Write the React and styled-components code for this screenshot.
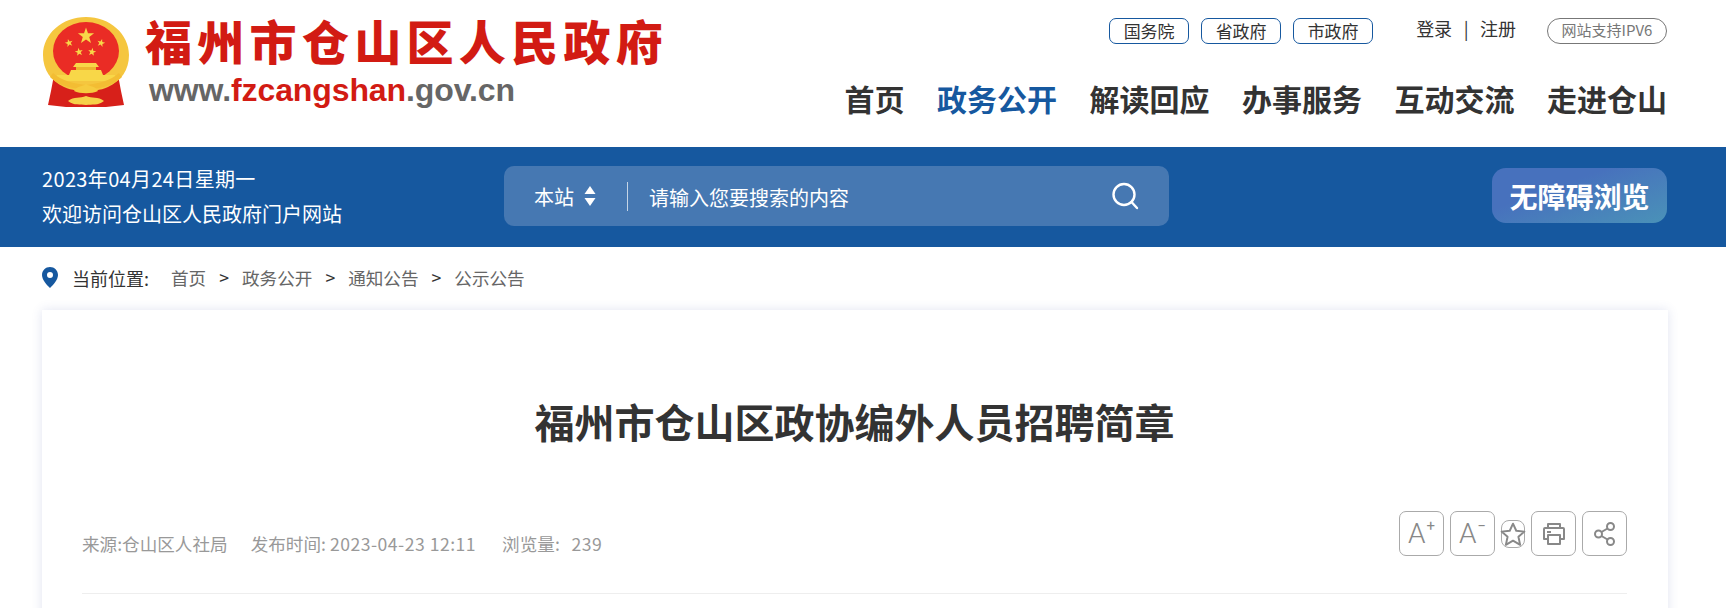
import React from "react";
import styled, { createGlobalStyle } from "styled-components";

const blue = "#16589f";
const sans = '"Noto Sans CJK SC", "Liberation Sans", sans-serif';

const GlobalStyle = createGlobalStyle`
  html, body {
    margin: 0;
    padding: 0;
    background: #fff;
    font-family: ${sans};
    overflow: hidden;
  }
  * {
    box-sizing: border-box;
  }
`;

const Page = styled.div`
  width: 1726px;
  height: 608px;
  overflow: hidden;
`;

const Header = styled.header`
  height: 147px;
  padding: 0 59px 0 42px;
  display: flex;
  justify-content: space-between;
`;

const LogoWrap = styled.div`
  display: flex;
  align-items: flex-start;
  gap: 15px;
  padding-top: 15px;
`;

const LogoText = styled.div`
  display: flex;
  flex-direction: column;
  margin-top: 1px;
`;

const LogoName = styled.div`
  font-family: "Liberation Serif", "Noto Sans CJK SC", serif;
  font-size: 47px;
  font-weight: 900;
  line-height: 56px;
  letter-spacing: 5.3px;
  color: #d21b13;
  white-space: nowrap;
`;

const LogoUrl = styled.div`
  margin: 1px 0 0 4px;
  font-family: "Liberation Sans", sans-serif;
  font-size: 32px;
  font-weight: 700;
  line-height: 34px;
  letter-spacing: -0.1px;
  color: #666;
  white-space: nowrap;

  b {
    color: #d21b13;
  }
`;

const HeaderRight = styled.div`
  display: flex;
  flex-direction: column;
  align-items: flex-end;
`;

const TopRow = styled.div`
  display: flex;
  align-items: center;
  height: 26px;
  margin-top: 18px;
`;

const TopLink = styled.a`
  width: 80px;
  height: 26px;
  margin-right: 12px;
  padding-bottom: 2px;
  display: flex;
  align-items: center;
  justify-content: center;
  border: 1px solid ${blue};
  border-radius: 7px;
  font-size: 17px;
  color: #333;
`;

const Auth = styled.div`
  margin: -6px 31px 0 31px;
  font-size: 18px;
  color: #333;
  display: flex;
  gap: 11.5px;
`;

const Ipv6 = styled.div`
  width: 120px;
  height: 26px;
  padding-bottom: 3px;
  display: flex;
  align-items: center;
  justify-content: center;
  border: 1px solid #777;
  border-radius: 13px;
  font-size: 15px;
  color: #777;
`;

const MainNav = styled.nav`
  display: flex;
  gap: 32.5px;
  margin-top: 32px;
`;

const NavItem = styled.a`
  font-size: 30px;
  line-height: 44px;
  font-weight: 700;
  color: ${(props) => (props.$active ? blue : "#333")};
`;

const Band = styled.div`
  height: 100px;
  background: ${blue};
  padding: 0 59px 0 42px;
  display: flex;
  align-items: center;
`;

const Welcome = styled.div`
  width: 462px;
  margin-top: -2px;
  color: #fff;
  font-size: 20px;
  line-height: 35px;
`;

const DateLine = styled.div`
  letter-spacing: 0.35px;
`;

const SearchBox = styled.div`
  width: 665px;
  height: 60px;
  margin-top: -2px;
  padding: 0 30px;
  border-radius: 10px;
  background: #4678b2;
  display: flex;
  align-items: center;
  color: #fff;
  font-size: 20px;
`;

const Scope = styled.div`
  width: 94px;
  height: 29px;
  display: flex;
  align-items: center;
  gap: 10px;
  border-right: 1px solid #c5d5e6;
`;

const Placeholder = styled.div`
  flex: 1;
  padding: 2px 0 0 21px;
`;

const A11yButton = styled.a`
  width: 175px;
  height: 55px;
  margin: -3px 0 0 auto;
  border-radius: 14px;
  background: linear-gradient(160deg, #4771bd 35%, #4a92b8 100%);
  color: #fff;
  font-size: 28px;
  font-weight: 700;
  display: flex;
  align-items: center;
  justify-content: center;
`;

const Crumbs = styled.div`
  height: 63px;
  padding: 0 0 2px 42px;
  display: flex;
  align-items: center;
  font-size: 17.6px;
  color: #666;
`;

const CrumbLabel = styled.span`
  margin: 0 22px 0 14px;
  font-size: 18px;
  color: #333;
`;

const CrumbSep = styled.span`
  margin: 0 13px;
  color: #333;
`;

const Card = styled.main`
  width: 1626px;
  height: 320px;
  margin-left: 42px;
  padding: 0 41px 0 40px;
  background: #fff;
  box-shadow: 0 0 10px rgba(70, 90, 170, 0.16);
`;

const Title = styled.h1`
  margin: 0;
  padding-top: 81px;
  font-size: 40px;
  line-height: 60px;
  font-weight: 700;
  text-align: center;
  color: #333;
`;

const MetaRow = styled.div`
  height: 143px;
  display: flex;
  align-items: flex-start;
  justify-content: space-between;
  border-bottom: 1px solid #eee;
`;

const MetaText = styled.div`
  display: flex;
  gap: 23px;
  margin-top: 80px;
  font-size: 17.6px;
  line-height: 26px;
  color: #999;

  span:last-child {
    margin-left: 3px;
  }
`;

const MetaNum = styled.em`
  font-style: normal;
  letter-spacing: 0.5px;
`;

const Tools = styled.div`
  display: flex;
  align-items: center;
  gap: 6px;
  margin-top: 60px;
`;

const ToolButton = styled.button`
  width: ${(props) => (props.$small ? "24px" : "45px")};
  height: ${(props) => (props.$small ? "28px" : "45px")};
  padding: 0;
  border: 1px solid #aaa;
  border-radius: ${(props) => (props.$small ? "8px" : "7px")};
  background: #fff;
  color: #888;
  display: flex;
  align-items: center;
  justify-content: center;
  font-family: "Roboto", "Liberation Sans", sans-serif;
  font-size: 28px;
  font-weight: 300;
  line-height: 1;
`;

const Sup = styled.sup`
  font-size: 15px;
  font-weight: 400;
  line-height: 1;
  margin: -14px 0 0 1px;
`;

const star = (cx, cy, r, rot = 0) => {
  const pts = [];
  for (let i = 0; i < 10; i++) {
    const rad = i % 2 === 0 ? r : r * 0.4;
    const a = ((-90 + i * 36 + rot) * Math.PI) / 180;
    pts.push(`${cx + rad * Math.cos(a)},${cy + rad * Math.sin(a)}`);
  }
  return pts.join(" ");
};

function Emblem() {
  return (
    <svg width="88" height="94" viewBox="0 0 88 94">
      {/* red drapes */}
      <path d="M12 60 L9 76 L6 90 L24 92 L64 92 L82 90 L79 76 L76 60 Z" fill="#d7201a" />
      {/* gold ring */}
      <path
        d="M44 2 C20 2 1 19 1 40 C1 55 9 66 22 72 C30 76 38 75 44 78 C50 75 58 76 66 72 C79 66 87 55 87 40 C87 19 68 2 44 2 Z"
        fill="#f5c63f"
      />
      {/* red field */}
      <ellipse cx="44" cy="36" rx="33" ry="29" fill="#ea2c25" />
      <polygon points={star(44, 21, 8.5)} fill="#f8d748" />
      <polygon points={star(27, 28, 4.2, -15)} fill="#f8d748" />
      <polygon points={star(59, 28, 4.2, 15)} fill="#f8d748" />
      <polygon points={star(37, 37, 4.2, -10)} fill="#f8d748" />
      <polygon points={star(50, 37, 4.2, 10)} fill="#f8d748" />
      {/* gate */}
      <path d="M34 48 L54 48 L57 52 L31 52 Z" fill="#f8d748" />
      <rect x="34" y="52" width="20" height="3" fill="#eeb52f" />
      <path d="M29 55 L59 55 L61 60 L27 60 Z" fill="#f8d748" />
      <rect x="15" y="60" width="58" height="6" fill="#f8d748" />
      <path d="M11 58 C20 66 30 68 44 70 C58 68 68 66 77 58 L80 62 C70 72 58 73 44 75 C30 73 18 72 8 62 Z" fill="#f3bd33" />
      {/* knots */}
      <path d="M32 76 C36 70 40 72 44 69 C48 72 52 70 56 76 C50 79 38 79 32 76 Z" fill="#f6cb3f" />
      <path d="M26 86 C32 81 38 84 44 81 C50 84 56 81 62 86 C56 91 50 89 44 90 C38 89 32 91 26 86 Z" fill="#f6d04a" />
    </svg>
  );
}

function Sorter() {
  return (
    <svg width="12" height="22" viewBox="0 0 12 22" fill="#fff">
      <path d="M6 1 L11.5 9 L0.5 9 Z" />
      <path d="M0.5 13 L11.5 13 L6 21 Z" />
    </svg>
  );
}

function SearchIcon() {
  return (
    <svg width="28" height="28" viewBox="0 0 28 28" fill="none" stroke="#fff" strokeWidth="2.4" strokeLinecap="round">
      <circle cx="13" cy="12.5" r="10.5" />
      <path d="M20.5 20 L26 26" />
    </svg>
  );
}

function Pin() {
  return (
    <svg width="16" height="21" viewBox="0 0 16 21">
      <path
        fillRule="evenodd"
        fill={blue}
        d="M8 0 C3.6 0 0 3.5 0 8 C0 13 5 18 8 21 C11 18 16 13 16 8 C16 3.5 12.4 0 8 0 Z M8 5 A3 3 0 1 1 8 11 A3 3 0 1 1 8 5 Z"
      />
    </svg>
  );
}

const FixedIcon = styled.svg`
  flex-shrink: 0;
`;

function StarIcon() {
  return (
    <FixedIcon width="26" height="26" viewBox="0 0 24 24" fill="none" stroke="#888" strokeWidth="1.8" strokeLinejoin="round">
      <path d="M12 2.5 L15 9 L22.5 9.8 L17 14.6 L18.6 22 L12 18.2 L5.4 22 L7 14.6 L1.5 9.8 L9 9 Z" />
    </FixedIcon>
  );
}

function PrintIcon() {
  return (
    <svg width="26" height="26" viewBox="0 0 26 26" fill="none" stroke="#888" strokeWidth="2" strokeLinejoin="round">
      <path d="M7 7 V3 H19 V7" />
      <path d="M6 18 H3 V8 Q3 7 4 7 H22 Q23 7 23 8 V18 H20" />
      <path d="M7 14 H19 V23 H7 Z" />
      <path d="M6 11 H10" />
    </svg>
  );
}

function ShareIcon() {
  return (
    <svg width="24" height="26" viewBox="0 0 24 26" fill="none" stroke="#888" strokeWidth="2">
      <circle cx="17.5" cy="5.5" r="3.5" />
      <circle cx="5.5" cy="13" r="3.5" />
      <circle cx="17.5" cy="20.5" r="3.5" />
      <path d="M8.5 11 L14.5 7.5" />
      <path d="M8.5 15 L14.5 18.5" />
    </svg>
  );
}

const navItems = ["首页", "政务公开", "解读回应", "办事服务", "互动交流", "走进仓山"];
const crumbs = ["首页", "政务公开", "通知公告", "公示公告"];

export default function App() {
  return (
    <Page>
      <GlobalStyle />
      <Header>
        <LogoWrap>
          <Emblem />
          <LogoText>
            <LogoName>福州市仓山区人民政府</LogoName>
            <LogoUrl>
              www.<b>fzcangshan</b>.gov.cn
            </LogoUrl>
          </LogoText>
        </LogoWrap>
        <HeaderRight>
          <TopRow>
            <TopLink>国务院</TopLink>
            <TopLink>省政府</TopLink>
            <TopLink>市政府</TopLink>
            <Auth>
              <span>登录</span>
              <span>|</span>
              <span>注册</span>
            </Auth>
            <Ipv6>网站支持IPV6</Ipv6>
          </TopRow>
          <MainNav>
            {navItems.map((item) => (
              <NavItem key={item} $active={item === "政务公开"}>
                {item}
              </NavItem>
            ))}
          </MainNav>
        </HeaderRight>
      </Header>

      <Band>
        <Welcome>
          <DateLine>2023年04月24日星期一</DateLine>
          <div>欢迎访问仓山区人民政府门户网站</div>
        </Welcome>
        <SearchBox>
          <Scope>
            本站
            <Sorter />
          </Scope>
          <Placeholder>请输入您要搜索的内容</Placeholder>
          <SearchIcon />
        </SearchBox>
        <A11yButton>无障碍浏览</A11yButton>
      </Band>

      <Crumbs>
        <Pin />
        <CrumbLabel>当前位置:</CrumbLabel>
        {crumbs.map((c, i) => (
          <React.Fragment key={c}>
            {i > 0 && <CrumbSep>&gt;</CrumbSep>}
            <span>{c}</span>
          </React.Fragment>
        ))}
      </Crumbs>

      <Card>
        <Title>福州市仓山区政协编外人员招聘简章</Title>
        <MetaRow>
          <MetaText>
            <span>来源:仓山区人社局</span>
            <span>
              发布时间: <MetaNum>2023-04-23 12:11</MetaNum>
            </span>
            <span>
              浏览量:&nbsp;&nbsp;&nbsp;<MetaNum>239</MetaNum>
            </span>
          </MetaText>
          <Tools>
            <ToolButton>
              A<Sup>+</Sup>
            </ToolButton>
            <ToolButton>
              A<Sup>−</Sup>
            </ToolButton>
            <ToolButton $small>
              <StarIcon />
            </ToolButton>
            <ToolButton>
              <PrintIcon />
            </ToolButton>
            <ToolButton>
              <ShareIcon />
            </ToolButton>
          </Tools>
        </MetaRow>
      </Card>
    </Page>
  );
}
